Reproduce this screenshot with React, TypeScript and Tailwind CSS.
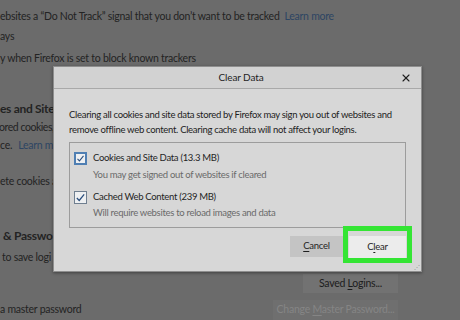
import { X } from 'lucide-react';

const font = { fontFamily: 'Lato, "Noto Sans", sans-serif' };

function Check({ focused }: { focused?: boolean }) {
  return (
    <span
      className={`flex h-[13px] w-[13px] shrink-0 items-center justify-center bg-[#eef0f2] ${
        focused ? 'border-2 border-[#4f7fb3]' : 'border border-[#6f7f90]'
      }`}
    >
      <svg viewBox="0 0 12 12" className="h-[11px] w-[11px]">
        <path d="M2 6.5 L4.6 9.2 L10 2.5" fill="none" stroke="#2b4f7e" strokeWidth="1.4" />
      </svg>
    </span>
  );
}

export default function App() {
  return (
    <div
      className="relative h-[320px] w-[460px] overflow-hidden bg-[#6b6b6b] text-[10.5px] tracking-[-0.25px] text-[#232323]"
      style={font}
    >
      {/* page behind the dialog */}
      <div className="flex flex-col whitespace-nowrap pt-[7px]">
        <div className="flex h-[20px] items-center">
          <span>ebsites a “Do Not Track” signal that you don’t want to be tracked</span>
          <span className="ml-[5px] text-[#2d4563]">Learn more</span>
        </div>
        <div className="flex h-[20px] items-center">ays</div>
        <div className="mt-[2px] flex h-[20px] items-center">y when Firefox is set to block known trackers</div>
        <div className="mt-[30px] flex h-[20px] items-center text-[12px] font-bold tracking-[-0.3px]">es and Site</div>
        <div className="-ml-[1px] flex h-[18px] items-center tracking-[-0.45px]">ored cookies,</div>
        <div className="flex h-[18px] items-center">
          ce.<span className="ml-[6px] text-[#2d4563]">Learn m</span>
        </div>
        <div className="mt-[18px] flex h-[18px] items-center">ete cookies a</div>
        <div className="mt-[35px] flex h-[20px] items-center pl-[3px] text-[12px] font-bold tracking-[-0.3px]">&amp; Passwo</div>
        <div className="mt-[3px] flex h-[18px] items-center pl-[2px]">to save logi</div>
        <div className="mt-[7px] flex justify-end pr-[62px]">
          <span className="flex h-[19px] w-[95px] items-center justify-center bg-[#727272] text-[#1c1c1c]">
            <span>
              Saved <u className="underline-offset-2">L</u>ogins...
            </span>
          </span>
        </div>
        <div className="mt-[7px] flex h-[20px] items-center justify-between pr-[62px]">
          <span>a master password</span>
          <span className="flex h-[20px] w-[125px] items-center justify-center bg-[#6f6f6f] text-[#858585]">
            <span>
              Change <u className="underline-offset-2">M</u>aster Password...
            </span>
          </span>
        </div>
      </div>

      {/* dialog */}
      <div className="absolute left-[53px] top-[66px] flex h-[206px] w-[369px] flex-col border border-[#8e8e8e] bg-[#d7d7d7] shadow-[0_1px_3px_rgba(0,0,0,0.4)]">
        <div className="flex h-[22px] shrink-0 items-center border-b border-[#a9a9a9] bg-[#d2d2d2]">
          <span className="flex-1 pl-[28px] text-center text-[10px] tracking-[-0.1px] text-[#1e1e1e]">Clear Data</span>
          <X className="mr-[9px] h-[12px] w-[12px] text-[#1e1e1e]" strokeWidth={2.2} />
        </div>
        <div className="whitespace-nowrap px-[15px] pt-[18px] text-[9.5px] leading-[15px] tracking-[-0.3px] text-[#222]">
          <p>Clearing all cookies and site data stored by Firefox may sign you out of websites and</p>
          <p>remove offline web content. Clearing cache data will not affect your logins.</p>
        </div>
        <div className="mx-[15px] mt-[5px] flex h-[86px] flex-col border border-[#9c9c9c] pl-[4px] pt-[9px] text-[9.5px] tracking-[-0.3px] text-[#1f1f1f]">
          <div className="flex h-[13px] items-center gap-[6px]">
            <Check focused />
            <span>Cookies and Site Data (13.3 MB)</span>
          </div>
          <div className="mt-[3px] pl-[19px] leading-[14px] text-[#6a6a6a]">You may get signed out of websites if cleared</div>
          <div className="mt-[9px] flex h-[13px] items-center gap-[6px]">
            <Check />
            <span>Cached Web Content (239 MB)</span>
          </div>
          <div className="mt-[2px] pl-[19px] leading-[14px] text-[#6a6a6a]">Will require websites to reload images and data</div>
        </div>
        <div className="mt-[8px] flex justify-end gap-[6px] pr-[15px] text-[9.5px] text-[#1f1f1f]">
          <span className="flex h-[21px] w-[53px] items-center justify-center bg-[#c4c4c4]">
            <span>
              <u className="underline-offset-2">C</u>ancel
            </span>
          </span>
          <span className="relative flex h-[22px] w-[57px] items-center justify-center bg-[#ececec]">
            <span>
              C<u className="underline-offset-2">l</u>ear
            </span>
            <span className="absolute -inset-x-[6px] -bottom-[5px] -top-[10px] border-[5px] border-[#34e534]" />
          </span>
        </div>
        <div className="absolute bottom-[1px] right-[1px] text-[6px] leading-none text-[#8a8a8a]">⋰</div>
      </div>
    </div>
  );
}
